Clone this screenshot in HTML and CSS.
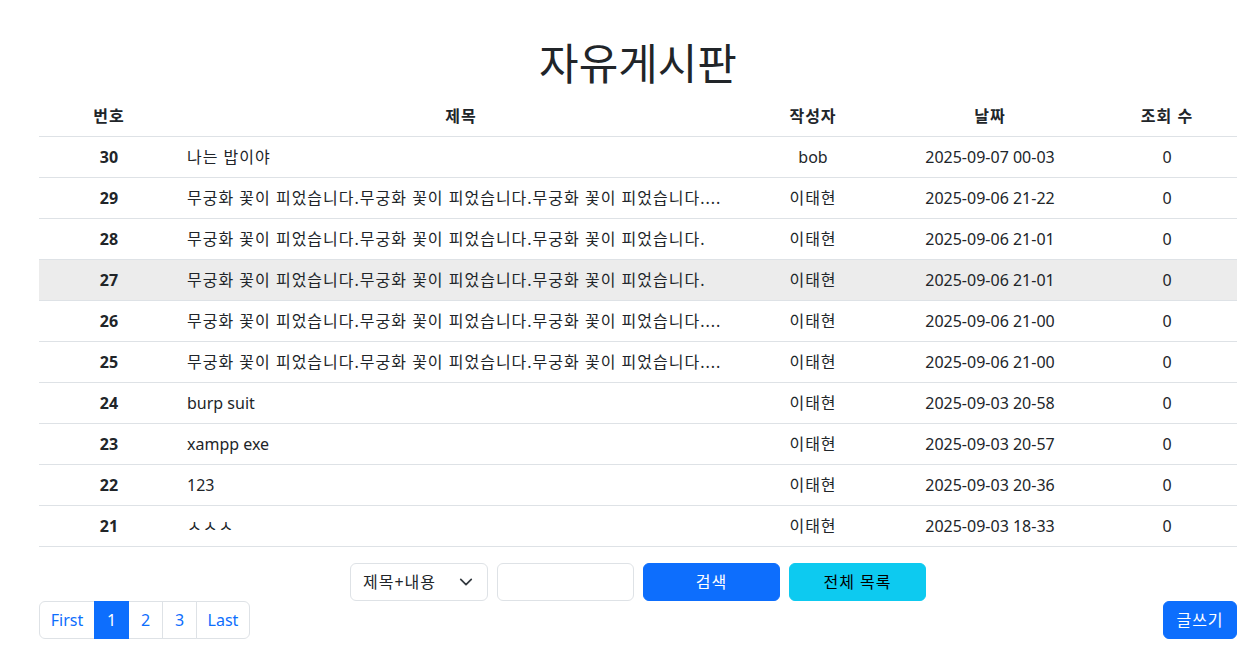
FILE: index.html
```html
<!DOCTYPE html>
<html lang="ko">
<head>
<meta charset="utf-8">
<title>자유게시판</title>
<link rel="stylesheet" href="styles.css">
</head>
<body>
<div class="wrap">
  <h1 class="title">자유게시판</h1>
  <table class="board">
    <colgroup>
      <col class="c-no"><col class="c-title"><col class="c-writer"><col class="c-date"><col class="c-views">
    </colgroup>
    <thead>
      <tr><th class="ko">번호</th><th class="ko">제목</th><th class="ko">작성자</th><th class="ko">날짜</th><th class="ko">조회 수</th></tr>
    </thead>
    <tbody>
      <tr><th>30</th><td class="t ko">나는 밥이야</td><td>bob</td><td>2025-09-07 00-03</td><td>0</td></tr>
      <tr><th>29</th><td class="t ko">무궁화 꽃이 피었습니다.무궁화 꽃이 피었습니다.무궁화 꽃이 피었습니다....</td><td class="ko">이태현</td><td>2025-09-06 21-22</td><td>0</td></tr>
      <tr><th>28</th><td class="t ko">무궁화 꽃이 피었습니다.무궁화 꽃이 피었습니다.무궁화 꽃이 피었습니다.</td><td class="ko">이태현</td><td>2025-09-06 21-01</td><td>0</td></tr>
      <tr class="hover"><th>27</th><td class="t ko">무궁화 꽃이 피었습니다.무궁화 꽃이 피었습니다.무궁화 꽃이 피었습니다.</td><td class="ko">이태현</td><td>2025-09-06 21-01</td><td>0</td></tr>
      <tr><th>26</th><td class="t ko">무궁화 꽃이 피었습니다.무궁화 꽃이 피었습니다.무궁화 꽃이 피었습니다....</td><td class="ko">이태현</td><td>2025-09-06 21-00</td><td>0</td></tr>
      <tr><th>25</th><td class="t ko">무궁화 꽃이 피었습니다.무궁화 꽃이 피었습니다.무궁화 꽃이 피었습니다....</td><td class="ko">이태현</td><td>2025-09-06 21-00</td><td>0</td></tr>
      <tr><th>24</th><td class="t">burp suit</td><td class="ko">이태현</td><td>2025-09-03 20-58</td><td>0</td></tr>
      <tr><th>23</th><td class="t">xampp exe</td><td class="ko">이태현</td><td>2025-09-03 20-57</td><td>0</td></tr>
      <tr><th>22</th><td class="t">123</td><td class="ko">이태현</td><td>2025-09-03 20-36</td><td>0</td></tr>
      <tr><th>21</th><td class="t ko">ㅅㅅㅅ</td><td class="ko">이태현</td><td>2025-09-03 18-33</td><td>0</td></tr>
    </tbody>
  </table>
  <form class="search">
    <div class="select ko">
      <span>제목+내용</span>
      <svg width="16" height="16" viewBox="0 0 16 16"><path d="M2 5l6 6 6-6" fill="none" stroke="#343a40" stroke-width="2" stroke-linecap="round" stroke-linejoin="round"/></svg>
    </div>
    <input class="input" type="text">
    <button type="button" class="btn btn-primary ko">검색</button>
    <button type="button" class="btn btn-info ko">전체 목록</button>
  </form>
  <div class="bottom">
    <ul class="pager">
      <li class="first"><a>First</a></li>
      <li class="active num"><a>1</a></li>
      <li class="num"><a>2</a></li>
      <li class="num"><a>3</a></li>
      <li class="last"><a>Last</a></li>
    </ul>
    <button type="button" class="btn btn-primary write ko">글쓰기</button>
  </div>
</div>
</body>
</html>
```
FILE: styles.css
```css
* { box-sizing: border-box; }
html, body { margin: 0; padding: 0; background: #fff; }
body {
  font-family: "Noto Sans", "Noto Sans CJK KR", sans-serif;
  font-size: 16px;
  line-height: 1.5;
  color: #212529;
}
.ko { letter-spacing: 1px; }
.wrap {
  padding: 40px 19px 0 39px;
}
.title {
  margin: 0 0 8px;
  font-size: 43px;
  font-weight: 400;
  line-height: 48px;
  text-align: center;
}
.board {
  width: 100%;
  border-collapse: collapse;
  table-layout: fixed;
}
.c-no { width: 140px; }
.c-writer { width: 140px; }
.c-date { width: 214px; }
.c-views { width: 140px; }
.board th, .board td {
  padding: 8px;
  border-bottom: 1px solid #dee2e6;
  text-align: center;
  white-space: nowrap;
  overflow: hidden;
}
.board th { font-weight: 700; }
.board td.t { text-align: left; }
.board tr.hover th, .board tr.hover td { background: #ececec; }
.search {
  display: flex;
  justify-content: center;
  gap: 9px;
  margin-top: 16px;
}
.select {
  width: 138px;
  height: 38px;
  border: 1px solid #dee2e6;
  border-radius: 6px;
  display: flex;
  align-items: center;
  justify-content: space-between;
  padding: 0 14px 0 12px;
  font-size: 16px;
}
.select svg { width: 14px; height: 14px; }
.input {
  width: 137px;
  height: 38px;
  border: 1px solid #dee2e6;
  border-radius: 6px;
  font: inherit;
  padding: 6px 12px;
}
.btn {
  height: 38px;
  border: 1px solid transparent;
  border-radius: 6px;
  font: inherit;
  padding: 0 12px;
  cursor: pointer;
}
.search .btn { width: 137px; }
.btn-primary { background: #0d6efd; border-color: #0d6efd; color: #fff; }
.btn-info { background: #0dcaf0; border-color: #0dcaf0; color: #000; }
.bottom {
  display: flex;
  justify-content: space-between;
  align-items: flex-start;
  margin-top: 0;
}
.pager {
  display: flex;
  list-style: none;
  margin: 0;
  padding: 0;
}
.pager li a {
  display: block;
  height: 38px;
  padding: 6px 0;
  text-align: center;
  color: #0d6efd;
  border: 1px solid #dee2e6;
  margin-left: -1px;
  background: #fff;
}
.pager li.first a { width: 56px; margin-left: 0; border-radius: 6px 0 0 6px; }
.pager li.num a { width: 35px; }
.pager li.last a { width: 54px; border-radius: 0 6px 6px 0; }
.pager li.active a {
  background: #0d6efd;
  border-color: #0d6efd;
  color: #fff;
  position: relative;
}
.write { width: 74px; padding: 0; }
```
